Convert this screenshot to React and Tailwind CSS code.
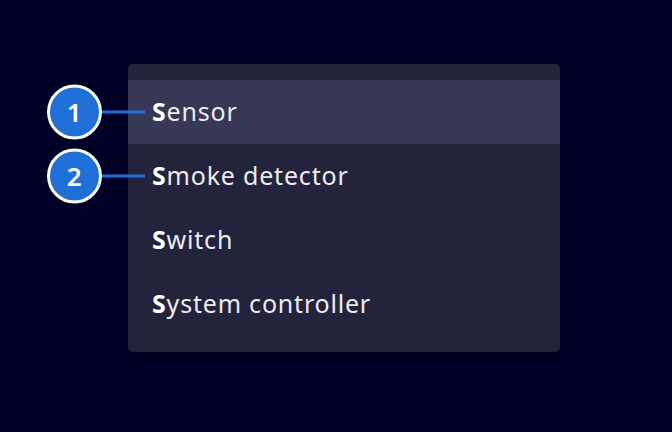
const items = ['ensor', 'moke detector', 'witch', 'ystem controller'];

function Callout({ n }) {
  return (
    <div className="absolute left-[-81px] top-1/2 -translate-y-1/2 flex items-center pointer-events-none">
      <div className="w-[55px] h-[55px] rounded-full bg-[#1f6fd9] border-[3px] border-white flex items-center justify-center text-white text-[26px] font-semibold">
        {n}
      </div>
      <div className="w-[43px] h-[3px] bg-[#1f6fd9]" />
    </div>
  );
}

export default function App() {
  return (
    <div
      className="w-[672px] h-[432px] bg-[#000028] pt-[64px] pl-[128px]"
      style={{ fontFamily: '"Noto Sans", "Open Sans", sans-serif' }}
    >
      <ul className="w-[432px] list-none m-0 py-4 bg-[#23233c] rounded-[5px] shadow-[0_4px_16px_rgba(0,0,0,0.4)]">
        {items.map((t, i) => (
          <li
            key={t}
            className={`relative h-16 pl-6 flex items-center text-[25px] tracking-[0.8px] text-[#ebebf0] ${
              i === 0 ? 'bg-[#373756]' : ''
            }`}
          >
            {i < 2 && <Callout n={i + 1} />}
            <span>
              <span className="font-bold text-white">S</span>
              {t}
            </span>
          </li>
        ))}
      </ul>
    </div>
  );
}
